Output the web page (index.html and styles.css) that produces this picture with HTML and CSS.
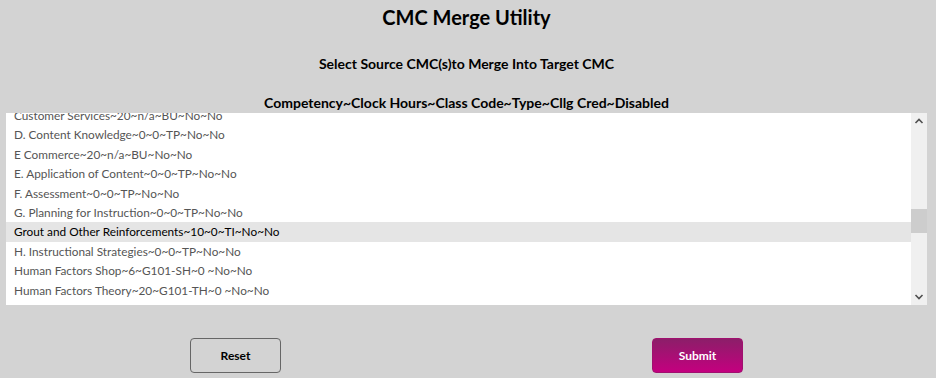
FILE: index.html
```html
<!DOCTYPE html>
<html lang="en">

<head>
    <meta charset="UTF-8">
    <meta name="viewport" content="width=device-width, initial-scale=1.0">
    <title>CMC Merge Utility</title>
    <link rel="stylesheet" href="styles.css">
</head>

<body>

    <h1>CMC Merge Utility</h1>

    <h2 class="subtitle">Select Source CMC(s)to Merge Into Target CMC</h2>

    <div class="list-header">Competency~Clock Hours~Class Code~Type~Cllg Cred~Disabled</div>

    <div class="listbox">
        <div class="list-view">
            <div class="list-items">
                <div class="item">Customer Services~20~n/a~BU~No~No</div>
                <div class="item">D. Content Knowledge~0~0~TP~No~No</div>
                <div class="item">E Commerce~20~n/a~BU~No~No</div>
                <div class="item">E. Application of Content~0~0~TP~No~No</div>
                <div class="item">F. Assessment~0~0~TP~No~No</div>
                <div class="item">G. Planning for Instruction~0~0~TP~No~No</div>
                <div class="item selected">Grout and Other Reinforcements~10~0~TI~No~No</div>
                <div class="item">H. Instructional Strategies~0~0~TP~No~No</div>
                <div class="item">Human Factors Shop~6~G101-SH~0 ~No~No</div>
                <div class="item">Human Factors Theory~20~G101-TH~0 ~No~No</div>
                <div class="item">I. Professional Knowledge and Ethical Practices~0~0~TP~No~No</div>
            </div>
        </div>
        <div class="scrollbar">
            <svg class="arrow" width="16" height="16" viewBox="0 0 16 16">
                <path d="M4.5 10 L8 6.5 L11.5 10" fill="none" stroke="#505050" stroke-width="1.6" />
            </svg>
            <div class="track">
                <div class="thumb"></div>
            </div>
            <svg class="arrow" width="16" height="16" viewBox="0 0 16 16">
                <path d="M4.5 6 L8 9.5 L11.5 6" fill="none" stroke="#505050" stroke-width="1.6" />
            </svg>
        </div>
    </div>

    <div class="actions">
        <button type="button" class="btn-reset">Reset</button>
        <button type="button" class="btn-submit">Submit</button>
    </div>

</body>

</html>
```

FILE: styles.css
```css
body {
    margin: 0;
    padding: 0 9px 0 6px;
    background-color: #d3d3d3;
    font-family: Lato, "DejaVu Sans", sans-serif;
    color: #000;
}

h1 {
    margin: 0;
    padding-top: 5px;
    height: 27px;
    font-size: 20px;
    font-weight: bold;
    text-align: center;
}

.subtitle {
    margin: 0;
    padding-top: 23px;
    height: 20px;
    font-size: 14px;
    font-weight: bold;
    text-align: center;
}

.list-header {
    margin-top: 19px;
    height: 19px;
    font-size: 14px;
    font-weight: bold;
    text-align: center;
}

.listbox {
    display: flex;
    height: 192px;
    background-color: #fff;
}

.list-view {
    flex: 1;
    overflow: hidden;
}

.list-items {
    margin-top: -7px;
}

.item {
    height: 19.4px;
    line-height: 19.4px;
    padding-left: 8px;
    font-size: 11.8px;
    color: #555;
    white-space: nowrap;
}

.item.selected {
    background-color: #e5e5e5;
    color: #000;
}

.scrollbar {
    width: 16px;
    display: flex;
    flex-direction: column;
    background-color: #f0f0f0;
}

.arrow {
    display: block;
    flex: none;
}

.track {
    flex: 1;
    padding-top: 80px;
}

.thumb {
    height: 24px;
    background-color: #cdcdcd;
}

.actions {
    display: flex;
    justify-content: space-between;
    padding: 33px 184px 0 184px;
}

.btn-reset,
.btn-submit {
    width: 91px;
    height: 35px;
    font-family: inherit;
    font-size: 12px;
    font-weight: bold;
    border-radius: 4px;
    cursor: pointer;
}

.btn-reset {
    background-color: transparent;
    border: 1px solid #666;
    color: #000;
}

.btn-submit {
    background: linear-gradient(#8c1e69, #c4007f);
    border: 1px solid #a0106f;
    color: #fff;
}
```
